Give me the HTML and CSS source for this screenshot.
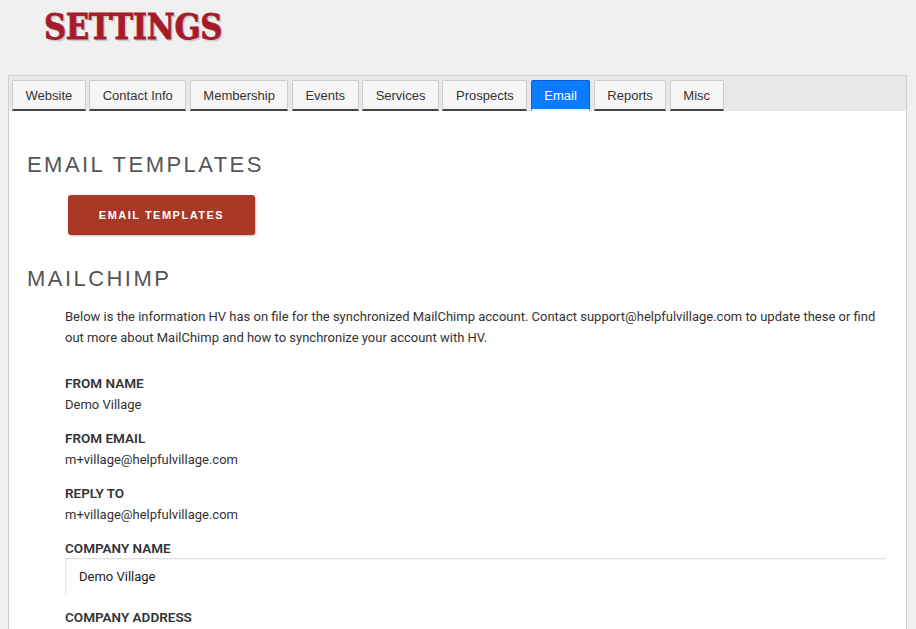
FILE: index.html
```html
<!DOCTYPE html>
<html>
<head>
<meta charset="utf-8">
<link rel="stylesheet" href="styles.css">
</head>
<body>
<header class="page-head">
  <h1 class="page-title">SETTINGS</h1>
</header>
<div class="panel">
  <nav class="tabs">
    <a class="tab">Website</a>
    <a class="tab">Contact Info</a>
    <a class="tab">Membership</a>
    <a class="tab">Events</a>
    <a class="tab">Services</a>
    <a class="tab">Prospects</a>
    <a class="tab active">Email</a>
    <a class="tab">Reports</a>
    <a class="tab">Misc</a>
  </nav>
  <main class="content">
    <h2 class="section-title">EMAIL TEMPLATES</h2>
    <div class="btn-row"><button class="btn">EMAIL TEMPLATES</button></div>
    <h2 class="section-title mc">MAILCHIMP</h2>
    <div class="body">
      <p class="intro">Below is the information HV has on file for the synchronized MailChimp account. Contact support@helpfulvillage.com to update these or find out more about MailChimp and how to synchronize your account with HV.</p>
      <div class="field">
        <div class="label">FROM NAME</div>
        <div class="value">Demo Village</div>
      </div>
      <div class="field">
        <div class="label">FROM EMAIL</div>
        <div class="value">m+village@helpfulvillage.com</div>
      </div>
      <div class="field">
        <div class="label">REPLY TO</div>
        <div class="value">m+village@helpfulvillage.com</div>
      </div>
      <div class="field">
        <div class="label">COMPANY NAME</div>
        <div class="input">Demo Village</div>
      </div>
      <div class="field">
        <div class="label">COMPANY ADDRESS</div>
      </div>
    </div>
  </main>
</div>
</body>
</html>
```
FILE: styles.css
```css
html, body {
  margin: 0;
  padding: 0;
  background: #f0f0f0;
  height: 629px;
  overflow: hidden;
}
body {
  padding: 0 9px 0 8px;
  font-family: Roboto, "Liberation Sans", Arial, sans-serif;
  color: #333;
}
.page-head {
  height: 75px;
  padding-left: 36px;
}
.page-title {
  margin: 0;
  padding-top: 7px;
  font-family: "DejaVu Serif", serif;
  font-weight: bold;
  font-size: 35px;
  line-height: 40px;
  color: #a61b2b;
  -webkit-text-stroke: 0.8px #a61b2b;
  text-shadow: 2px 2px 1px #c9c9c9;
  letter-spacing: -0.5px;
  transform: scaleX(0.88);
  transform-origin: left center;
}
.panel {
  border: 1px solid #cfcfcf;
  background: #fff;
  height: 560px;
}
.tabs {
  display: flex;
  gap: 3.5px;
  background: #e8e8e8;
  padding: 4px 0 0 3px;
  height: 31px;
}
.tab {
  display: flex;
  align-items: center;
  padding: 0 12.5px;
  border: 1px solid #cdcdcd;
  border-bottom: 2px solid #444;
  border-radius: 2px 2px 0 0;
  background: #f6f6f6;
  font-family: "Liberation Sans", Arial, sans-serif;
  font-size: 13px;
  color: #333;
  height: 28px;
}
.tab.active {
  background: #0a7cff;
  color: #fff;
  border-color: #0a5fd6;
  border-bottom: 2px solid #e8f1ff;
}
.content {
  padding: 0 0 0 18px;
}
.section-title {
  margin: 0;
  font-family: "Liberation Sans", Arial, sans-serif;
  font-weight: normal;
  font-size: 22px;
  letter-spacing: 2.45px;
  color: #555;
  line-height: 26px;
  padding-top: 41px;
}
.section-title.mc {
  padding-top: 31px;
}
.btn-row {
  padding: 17px 0 0 41px;
}
.btn {
  width: 187px;
  height: 40px;
  border: none;
  border-radius: 3px;
  background: #a93826;
  color: #fff;
  font-family: "Liberation Sans", Arial, sans-serif;
  font-weight: bold;
  font-size: 11px;
  letter-spacing: 1.5px;
  box-shadow: 1px 1px 2px rgba(0,0,0,0.25);
}
.body {
  padding: 14px 20px 0 38px;
}
.intro {
  margin: 0 0 25px;
  font-size: 13px;
  line-height: 21px;
  color: #333;
}
.field {
  margin-bottom: 13px;
}
.label {
  font-weight: 600;
  font-size: 13.5px;
  line-height: 21px;
  color: #333;
}
.value {
  font-size: 13px;
  line-height: 21px;
  color: #333;
}
.input {
  margin-top: -1px;
  height: 35px;
  display: flex;
  align-items: center;
  padding-left: 13px;
  font-size: 13px;
  color: #222;
  border-top: 1px solid #e2e2e2;
  border-left: 1px solid #e6e6e6;
  box-shadow: inset 0 1px 2px rgba(0,0,0,0.06);
}
```
